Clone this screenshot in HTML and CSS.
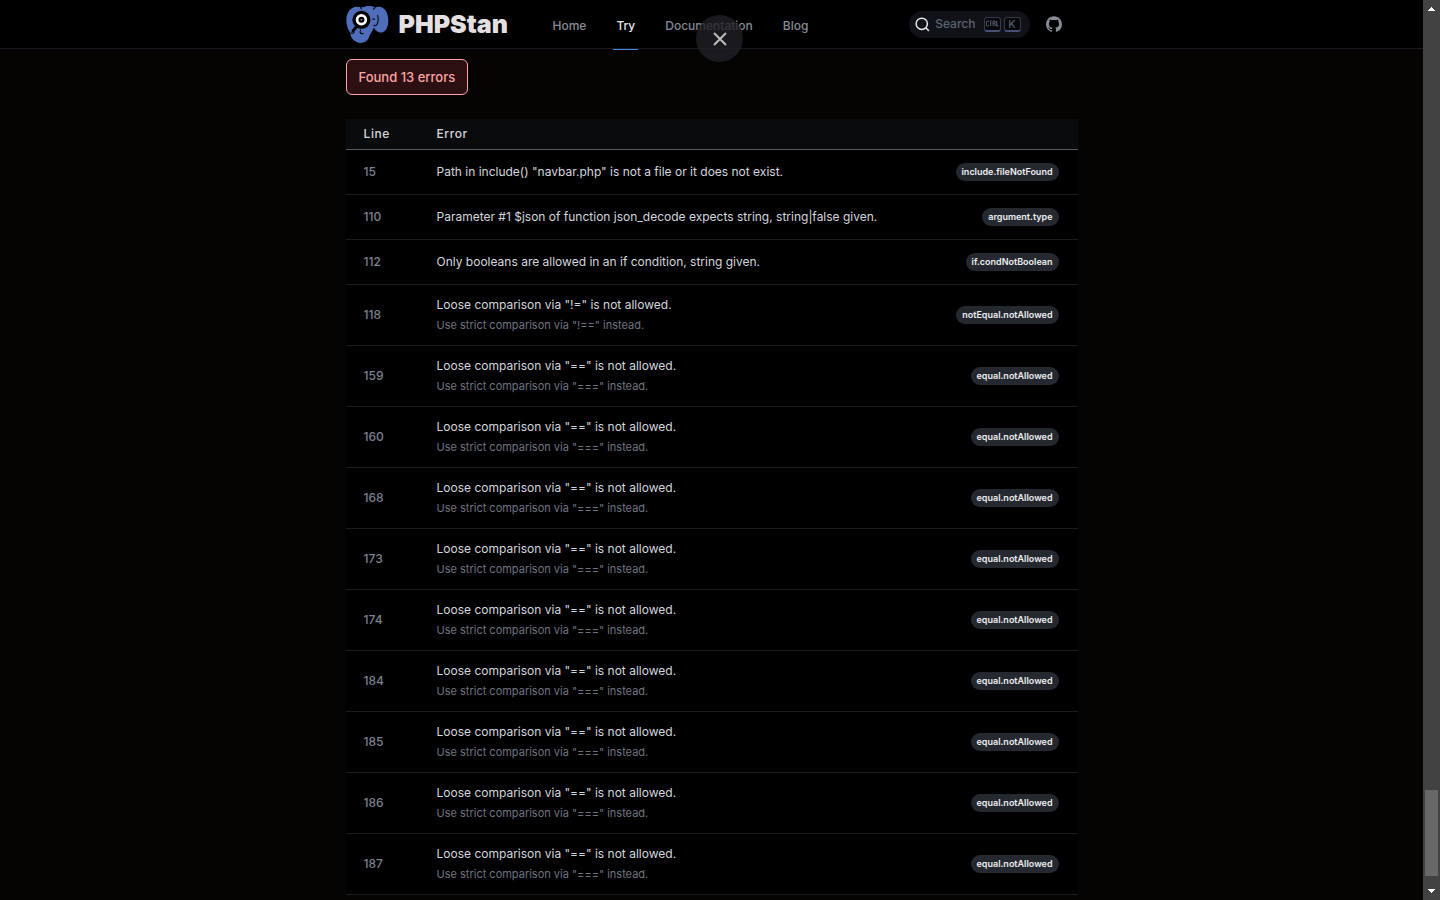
FILE: index.html
```html
<!DOCTYPE html>
<html lang="en">
<head>
<meta charset="utf-8">
<meta name="viewport" content="width=device-width, initial-scale=1">
<title>Playground | PHPStan</title>
<link rel="stylesheet" href="styles.css">
</head>
<body>
<div class="shell">
  <div class="page">
    <header class="topbar">
      <div class="container topbar-inner">
        <a class="brand" href="#">
          <svg class="brand-mark" viewBox="18 16 128 110" aria-hidden="true">
            <path fill="#4f6db8" d="M58 19C36 14 19 32 19 58c0 16 6 30 12 37-1 14 12 31 31 31 14 0 22-9 25-19 3-9 11-16 14-27 5 10 12 15 20 15 14 0 23-14 23-36 0-24-12-41-28-41-5 0-8 1-11 3-10-7-26-7-36-1-3-1-7-2-11-1z"/>
            <path fill="none" stroke="#000" stroke-width="3" d="M105 21c-3 2-5 4-6 6M112 42c3 12 2 22-2 29-3 5-7 4-10 1M60 17l4 9M97 55h7M62 86c-5 10 0 15 8 11"/>
            <path stroke="#000" stroke-width="9" stroke-linecap="round" d="M50 77L39 90"/>
            <path fill="none" stroke="#000" stroke-width="3" d="M32 95c3 3 8 3 11-1"/>
            <circle cx="64" cy="57" r="27"/>
            <circle cx="64" cy="57" r="17" fill="#fff"/>
            <circle cx="64" cy="57" r="9"/>
            <circle cx="64" cy="57" r="3" fill="#777"/>
          </svg>
          <span>PHPStan</span>
        </a>
        <nav class="nav" aria-label="Main">
          <a href="#">Home</a>
          <a class="active" href="#" aria-current="page">Try</a>
          <a href="#">Documentation</a>
          <a href="#">Blog</a>
        </nav>
        <div class="tools">
          <button class="search" type="button">
            <svg class="search-icon" viewBox="0 0 20 20" aria-hidden="true"><path d="M14.386 14.386l4.088 4.088-4.088-4.088A7.533 7.533 0 1 1 3.733 3.733a7.533 7.533 0 0 1 10.653 10.653z"/></svg>
            <span>Search</span>
            <span class="keys">
              <kbd><svg viewBox="0 0 15 15" role="img" aria-label="Ctrl"><path d="M4.505 4.496h2M5.505 5.496v5M8.216 4.496l.055 5.993M10 7.5c.333.333.5.667.5 1v2M12.326 4.5v5.996M8.384 4.496c1.674 0 2.116 0 2.116 1.5s-.442 1.5-2.116 1.5M3.205 9.303c-.09.448-.277 1.21-1.241 1.203C1 10.5.5 9.513.5 8V7c0-1.570.5-2.500 1.464-2.494.964.006 1.134.598 1.240 1.342M12.553 10.500h1.953"/></svg></kbd>
              <kbd>K</kbd>
            </span>
          </button>
          <a class="github" href="#" aria-label="GitHub">
            <svg viewBox="0 0 24 24" aria-hidden="true"><path fill="currentColor" d="M12 .297c-6.630 0-12 5.373-12 12 0 5.303 3.438 9.800 8.205 11.385.6.113.82-.258.82-.577 0-.285-.010-1.040-.015-2.040-3.338.724-4.042-1.610-4.042-1.610C4.422 18.070 3.633 17.700 3.633 17.700c-1.087-.744.084-.729.084-.729 1.205.084 1.838 1.236 1.838 1.236 1.070 1.835 2.809 1.305 3.495.998.108-.776.417-1.305.76-1.605-2.665-.3-5.466-1.332-5.466-5.930 0-1.310.465-2.380 1.235-3.220-.135-.303-.54-1.523.105-3.176 0 0 1.005-.322 3.300 1.230.96-.267 1.980-.399 3-.405 1.020.006 2.040.138 3 .405 2.280-1.552 3.285-1.230 3.285-1.230.645 1.653.24 2.873.12 3.176.765.840 1.230 1.910 1.230 3.220 0 4.610-2.805 5.625-5.475 5.920.42.360.81 1.096.81 2.220 0 1.606-.015 2.896-.015 3.286 0 .315.210.690.825.570C20.565 22.092 24 17.592 24 12.297c0-6.627-5.373-12-12-12"/></svg>
          </a>
        </div>
      </div>
    </header>
    <main class="container content">
      <p class="summary">Found 13 errors</p>
      <table class="errors">
        <thead><tr><th class="col-line" scope="col">Line</th><th scope="col" colspan="2">Error</th></tr></thead>
        <tbody>
          <tr><td>15</td><td>Path in include() "navbar.php" is not a file or it does not exist.</td><td><span class="badge">include.fileNotFound</span></td></tr>
          <tr><td>110</td><td>Parameter #1 $json of function json_decode expects string, string|false given.</td><td><span class="badge">argument.type</span></td></tr>
          <tr><td>112</td><td>Only booleans are allowed in an if condition, string given.</td><td><span class="badge">if.condNotBoolean</span></td></tr>
          <tr><td>118</td><td>Loose comparison via "!=" is not allowed.<p class="tip">Use strict comparison via "!==" instead.</p></td><td><span class="badge">notEqual.notAllowed</span></td></tr>
          <tr><td>159</td><td>Loose comparison via "==" is not allowed.<p class="tip">Use strict comparison via "===" instead.</p></td><td><span class="badge">equal.notAllowed</span></td></tr>
          <tr><td>160</td><td>Loose comparison via "==" is not allowed.<p class="tip">Use strict comparison via "===" instead.</p></td><td><span class="badge">equal.notAllowed</span></td></tr>
          <tr><td>168</td><td>Loose comparison via "==" is not allowed.<p class="tip">Use strict comparison via "===" instead.</p></td><td><span class="badge">equal.notAllowed</span></td></tr>
          <tr><td>173</td><td>Loose comparison via "==" is not allowed.<p class="tip">Use strict comparison via "===" instead.</p></td><td><span class="badge">equal.notAllowed</span></td></tr>
          <tr><td>174</td><td>Loose comparison via "==" is not allowed.<p class="tip">Use strict comparison via "===" instead.</p></td><td><span class="badge">equal.notAllowed</span></td></tr>
          <tr><td>184</td><td>Loose comparison via "==" is not allowed.<p class="tip">Use strict comparison via "===" instead.</p></td><td><span class="badge">equal.notAllowed</span></td></tr>
          <tr><td>185</td><td>Loose comparison via "==" is not allowed.<p class="tip">Use strict comparison via "===" instead.</p></td><td><span class="badge">equal.notAllowed</span></td></tr>
          <tr><td>186</td><td>Loose comparison via "==" is not allowed.<p class="tip">Use strict comparison via "===" instead.</p></td><td><span class="badge">equal.notAllowed</span></td></tr>
          <tr><td>187</td><td>Loose comparison via "==" is not allowed.<p class="tip">Use strict comparison via "===" instead.</p></td><td><span class="badge">equal.notAllowed</span></td></tr>
        </tbody>
      </table>
    </main>
  </div>
  <div class="scrollbar" aria-hidden="true">
    <svg class="arrow" viewBox="0 0 7 4" shape-rendering="crispEdges"><path d="M3 0h1v1h1v1h1v1h1v1H0V3h1V2h1V1h1z"/></svg>
    <div class="track"><div class="thumb"></div></div>
    <svg class="arrow" viewBox="0 0 7 4" shape-rendering="crispEdges"><path d="M0 0h7v1H6v1H5v1H4v1H3V3H2V2H1V1H0z"/></svg>
  </div>
</div>
<button class="close" type="button" aria-label="Close">
  <svg viewBox="0 0 14 14" aria-hidden="true"><path d="M1 1l12 12M13 1L1 13"/></svg>
</button>
</body>
</html>
```

FILE: styles.css
```css
* { box-sizing: border-box; }

body {
  margin: 0;
  background: #050403;
  color: #d3d7df;
  font-family: Inter, "Liberation Sans", sans-serif;
  font-size: 12px;
  line-height: 20px;
}

a { color: inherit; text-decoration: none; }
button { border: 0; font: inherit; cursor: pointer; }
svg { display: block; }

.shell { display: flex; min-height: 100vh; }
.page { flex: 1; min-width: 0; }
.container { width: 100%; max-width: 732px; margin: 0 auto; }

.topbar { background: #000; border-bottom: 1px solid #17191e; }
.topbar-inner { display: flex; height: 48px; }

.brand {
  display: flex;
  align-items: center;
  gap: 10px;
  width: 204px;
  color: #e4e0e2;
  font-size: 25px;
  font-weight: 900;
}
.brand-mark { width: 43px; height: 37px; }

.nav { display: flex; gap: 24px; color: #868b96; font-weight: 500; }
.nav a { display: flex; align-items: center; height: 50px; padding: 3px 3px 0; border-bottom: 1px solid transparent; }
.nav .active { color: #e5e7eb; border-color: #4386e8; }

.tools { display: flex; align-items: center; gap: 16px; margin-left: auto; padding-right: 16px; }
.search {
  display: flex;
  align-items: center;
  height: 27px;
  padding: 0 9px 0 6px;
  border-radius: 14px;
  background: #111217;
  color: #5d6473;
  font-weight: 500;
}
.search-icon { width: 15px; height: 15px; margin-right: 5px; fill: none; stroke: #e8e9ec; stroke-width: 2; }
.keys { display: flex; gap: 3px; margin-left: 8px; }
kbd {
  display: flex;
  align-items: center;
  justify-content: center;
  width: 17px;
  height: 15px;
  border: 1px solid #343a4b;
  border-bottom: 2px solid #4a4e73;
  border-radius: 3px;
  background: #07080c;
  font: 11px/12px Inter, sans-serif;
}
kbd svg { width: 13px; height: 13px; fill: none; stroke: #6a7182; }
.github { color: #868b96; }
.github svg { width: 16px; height: 16px; }

.content { padding-top: 10px; }
.summary {
  width: fit-content;
  margin: 0 0 24px;
  padding: 8px 12px;
  border: 1px solid #fca5a5;
  border-radius: 6px;
  background: #2c1011;
  color: #fca5a5;
  font-size: 13px;
  font-weight: 500;
  line-height: 18px;
}

.errors { width: 100%; border-collapse: separate; border-spacing: 0; background: #000; }
th {
  padding: 5px 18px;
  border-bottom: 1px solid #555861;
  background: #090b0d;
  font-weight: 500;
  letter-spacing: 0.05em;
  text-align: left;
}
th + th { padding-left: 0; }
.col-line { width: 91px; }
td { padding: 10px 0; border-bottom: 1px solid #1a1b1e; height: 45px; }
td:first-child { padding-left: 18px; color: #7c828f; font-weight: 500; }
td:last-child { padding-right: 19px; text-align: right; white-space: nowrap; }
.tip { margin: 0; color: #6f7480; font-size: 11px; }
.badge {
  display: inline-block;
  padding: 0 6px;
  border-radius: 9px;
  background: #26282f;
  color: #eceef1;
  font-size: 9px;
  font-weight: 600;
  line-height: 18px;
  vertical-align: bottom;
}
td:last-child { line-height: 18px; }

.scrollbar { display: flex; flex-direction: column; align-items: center; width: 17px; padding: 7px 0; background: #424242; }
.arrow { width: 7px; height: 4px; fill: #fff; }
.track { display: flex; flex: 1; align-items: flex-end; margin: 6px 0 13px; }
.thumb { width: 13px; height: 86px; background: #686868; }

.close {
  position: fixed;
  top: 15px;
  left: 50%;
  display: grid;
  place-items: center;
  width: 47px;
  height: 47px;
  margin-left: -24px;
  padding: 0;
  border-radius: 50%;
  background: rgba(32, 33, 37, .8);
}
.close svg { width: 14px; height: 14px; fill: none; stroke: #bdbdbd; stroke-width: 2; }
```
